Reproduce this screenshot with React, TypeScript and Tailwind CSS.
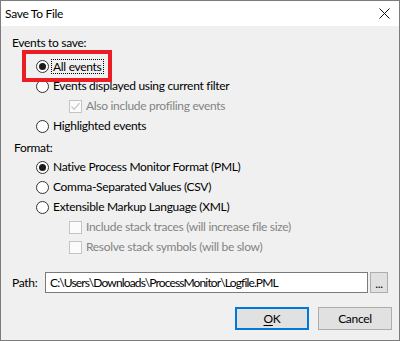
import React from "react";

const FONT = { fontFamily: 'Lato, "Noto Sans", "Liberation Sans", sans-serif' };

function Radio({ checked }: { checked?: boolean }) {
  return (
    <span className="flex h-[13px] w-[13px] shrink-0 items-center justify-center rounded-full border border-[#333333] bg-white">
      {checked && <span className="h-[7px] w-[7px] rounded-full bg-[#1a1a1a]" />}
    </span>
  );
}

function Checkbox({ checked }: { checked?: boolean }) {
  return (
    <span className="flex h-[13px] w-[13px] shrink-0 items-center justify-center border border-[#c4c4c4] bg-[#fbfbfb]">
      {checked && (
        <svg width="11" height="11" viewBox="0 0 11 11">
          <path d="M1.5 5.5 L4.2 8.3 L9.5 2.2" fill="none" stroke="#c4c4c4" strokeWidth="1.2" />
        </svg>
      )}
    </span>
  );
}

function RadioRow({ label, checked, focused }: { label: string; checked?: boolean; focused?: boolean }) {
  return (
    <div className="flex h-[20px] items-center pl-[35px]">
      <Radio checked={checked} />
      <span
        className={
          focused
            ? "ml-[2px] border border-dotted border-black px-[1px] leading-[13px] text-black"
            : "ml-[4px] text-black"
        }
      >
        {label}
      </span>
    </div>
  );
}

function CheckRow({ label, checked }: { label: string; checked?: boolean }) {
  return (
    <div className="flex h-[20px] items-center pl-[68px]">
      <Checkbox checked={checked} />
      <span className="ml-[4px] text-[#838383]">{label}</span>
    </div>
  );
}

export default function App() {
  return (
    <div
      className="flex h-[341px] w-[400px] flex-col border border-[#7c7c7c] bg-[#f0f0f0] text-[12px] tracking-[-0.3px] text-black"
      style={FONT}
    >
      <div className="flex h-[25px] shrink-0 items-center justify-between bg-white pl-[4px] pr-[9px]">
        <span>Save To File</span>
        <svg width="11" height="11" viewBox="0 0 11 11">
          <path d="M0.5 0.5 L10.5 10.5 M10.5 0.5 L0.5 10.5" stroke="#111" strokeWidth="1" />
        </svg>
      </div>

      <div className="relative flex flex-1 flex-col pt-[7px]">
        <div className="flex h-[20px] items-center pl-[11px]">Events to save:</div>
        <div className="mt-[3px]">
          <RadioRow label="All events" checked focused />
          <RadioRow label="Events displayed using current filter" />
          <CheckRow label="Also include profiling events" checked />
          <RadioRow label="Highlighted events" />
        </div>

        <div className="absolute left-[21px] top-[24px] h-[32px] w-[90px] border-[4px] border-[#ec1c24]" />

        <div className="mt-[3px] flex h-[18px] items-center pl-[13px]">Format:</div>
        <div>
          <RadioRow label="Native Process Monitor Format (PML)" checked />
          <RadioRow label="Comma-Separated Values (CSV)" />
          <RadioRow label="Extensible Markup Language (XML)" />
          <CheckRow label="Include stack traces (will increase file size)" />
          <CheckRow label="Resolve stack symbols (will be slow)" />
        </div>

        <div className="mt-[15px] flex h-[21px] items-center pl-[11px] pr-[11px]">
          <span className="w-[33px]">Path:</span>
          <div className="flex h-[21px] flex-1 items-center border border-[#7a7a7a] bg-white pl-[4px] tracking-[-0.85px]">
            C:\Users\Downloads\ProcessMonitor\Logfile.PML
          </div>
          <div className="ml-[2px] flex h-[21px] w-[18px] items-end justify-center border border-[#adadad] bg-[#e1e1e1] pb-[2px] leading-[12px]">
            ...
          </div>
        </div>

        <div className="mt-[14px] flex justify-end gap-[9px] pr-[7px]">
          <button className="flex h-[23px] w-[74px] items-center justify-center border-2 border-[#0078d7] bg-[#e1e1e1]">
            <span className="underline decoration-1 underline-offset-2">O</span>K
          </button>
          <button className="flex h-[23px] w-[74px] items-center justify-center border border-[#adadad] bg-[#e1e1e1]">
            Cancel
          </button>
        </div>
      </div>
    </div>
  );
}
